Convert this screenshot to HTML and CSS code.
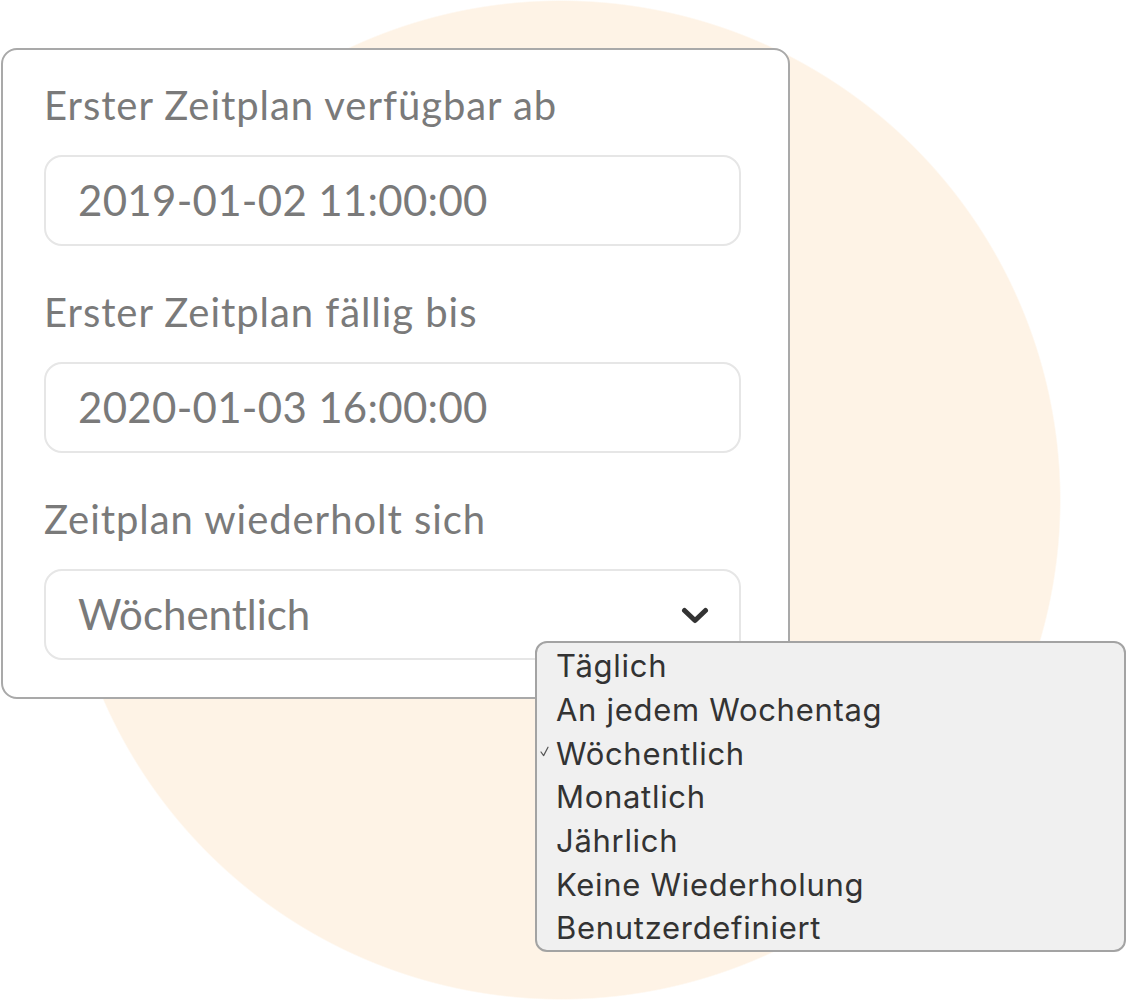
FILE: index.html
```html
<!DOCTYPE html>
<html lang="de">
<head>
<meta charset="utf-8">
<title>Zeitplan</title>
<link rel="stylesheet" href="styles.css">
</head>
<body>
<main class="stage">
  <form class="card">
    <div class="field">
      <label class="label">Erster Zeitplan verfügbar ab</label>
      <div class="input"><span class="value">2019-01-02 11:00:00</span></div>
    </div>
    <div class="field">
      <label class="label">Erster Zeitplan fällig bis</label>
      <div class="input"><span class="value">2020-01-03 16:00:00</span></div>
    </div>
    <div class="field">
      <label class="label">Zeitplan wiederholt sich</label>
      <div class="input select">
        <span class="value">Wöchentlich</span>
        <svg class="chevron" width="28" height="18" viewBox="0 0 28 18" aria-hidden="true">
          <path d="M3.5 3.5 L14 13.5 L24.5 3.5" fill="none" stroke="#333" stroke-width="5" stroke-linecap="round" stroke-linejoin="round"/>
        </svg>
      </div>
    </div>
  </form>
  <ul class="menu">
    <li class="item"><span class="mark"></span><span>Täglich</span></li>
    <li class="item"><span class="mark"></span><span>An jedem Wochentag</span></li>
    <li class="item checked"><span class="mark"><svg width="9" height="11" viewBox="0 0 9 11" aria-hidden="true"><path d="M1 6 L3.6 9.6 L8 1.2" fill="none" stroke="#555" stroke-width="1.2" stroke-linecap="round" stroke-linejoin="round"/></svg></span><span>Wöchentlich</span></li>
    <li class="item"><span class="mark"></span><span>Monatlich</span></li>
    <li class="item"><span class="mark"></span><span>Jährlich</span></li>
    <li class="item"><span class="mark"></span><span>Keine Wiederholung</span></li>
    <li class="item"><span class="mark"></span><span>Benutzerdefiniert</span></li>
  </ul>
</main>
</body>
</html>
```

FILE: styles.css
```css
* { box-sizing: border-box; }

html, body {
  margin: 0;
  padding: 0;
}

body {
  width: 1126px;
  height: 1000px;
  overflow: hidden;
  background-color: #ffffff;
  background-image: radial-gradient(circle 500px at 561px 500px, #fef3e6 99.7%, rgba(254, 243, 230, 0) 100%);
  background-repeat: no-repeat;
  font-family: Lato, "Open Sans", sans-serif;
}

.stage {
  position: relative;
  width: 1126px;
  height: 1000px;
  padding: 48px 0 0 1px;
}

.card {
  width: 789px;
  margin: 0;
  background: #ffffff;
  border: 2px solid #a9a9a9;
  border-radius: 16px;
  padding: 31px 47px 37px 41px;
  display: flex;
  flex-direction: column;
  gap: 42px;
}

.field {
  display: flex;
  flex-direction: column;
}

.label {
  display: block;
  font-size: 40px;
  line-height: 48px;
  letter-spacing: 0.95px;
  color: #7a7a7a;
  margin-bottom: 26px;
  white-space: nowrap;
}

.input {
  height: 91px;
  border: 2px solid #e6e6e6;
  border-radius: 18px;
  padding: 0 30px 2px 32px;
  display: flex;
  align-items: center;
  font-size: 42px;
  letter-spacing: 0.3px;
  color: #7a7a7a;
  background: #ffffff;
}

.select {
  justify-content: space-between;
}

.select .value {
  letter-spacing: 0;
}

.chevron {
  display: block;
  margin-top: 4px;
}

.menu {
  position: absolute;
  left: 535px;
  top: 641px;
  width: 591px;
  height: 311px;
  margin: 0;
  padding: 1.3px 0 0 0;
  list-style: none;
  background: #f0f0f0;
  border: 2px solid #a3a3a3;
  border-radius: 12px;
  font-family: Inter, "Liberation Sans", sans-serif;
  font-size: 31px;
  line-height: 43.67px;
  letter-spacing: 0.7px;
  color: #333333;
}

.item {
  display: flex;
  align-items: center;
  white-space: nowrap;
}

.mark {
  width: 19px;
  flex: none;
  display: flex;
  justify-content: center;
  padding-right: 5px;
}

.mark svg {
  display: block;
  margin-top: -4px;
}
```
